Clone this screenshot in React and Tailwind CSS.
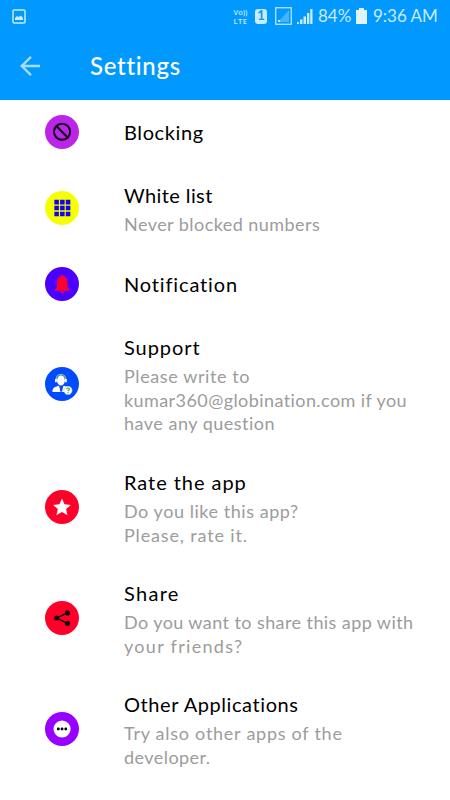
const icons = {
  block: (
    <g fill="none" stroke="#0b0010" strokeWidth="2">
      <circle cx="17.3" cy="17" r="8.2" />
      <path d="M11.5 11.2 23 22.8" />
    </g>
  ),
  grid: (
    <path
      fill="#1400f5"
      d="M9.5 9h4.6v4.6H9.5zM15.3 9h4.6v4.6h-4.6zM21.1 9h4.6v4.6h-4.6zM9.5 15h4.6v4.6H9.5zM15.3 15h4.6v4.6h-4.6zM21.1 15h4.6v4.6h-4.6zM9.5 21h4.6v4.6H9.5zM15.3 21h4.6v4.6h-4.6zM21.1 21h4.6v4.6h-4.6z"
    />
  ),
  bell: (
    <path
      fill="#ff0030"
      d="M16.2 9.3a1.3 1.3 0 0 1 2.6 0c2.7.7 4 3 4 5.7v5.4l2.1 2.4v1.2H10.1v-1.2l2.1-2.4V15c0-2.7 1.3-5 4-5.7zM15.6 24.7h3.8a1.9 1.9 0 0 1-3.8 0z"
    />
  ),
  support: (
    <g>
      <path fill="#fff" d="M7.5 25.4c0-4.1 1.8-5.4 6.4-6.5l2.6 3.2 2.5-3.2c3.2.7 5.3 1.8 5.5 4.6v1.9z" />
      <path fill="#004bff" d="m14.4 18.7 1.2 6.5h1.7l1.3-6.5-2.1 1.5z" />
      <ellipse cx="16.2" cy="13.6" rx="4" ry="5.2" fill="#fff" />
      <path fill="none" stroke="#86bf78" strokeWidth="1.4" d="M11.4 14v-1.7a4.8 4.8 0 0 1 9.6 0V15" />
      <path stroke="#fff" strokeWidth="1.7" d="M11.1 12.2v3.4M21.3 12.2v3.4" />
      <circle cx="23.3" cy="23.8" r="4.2" fill="#fff" stroke="#9bcfa0" strokeWidth=".6" />
      <path fill="none" stroke="#43a127" strokeWidth="1.2" d="M21.9 22.6c.1-1.8 2.9-1.7 2.9 0 0 1-1.4 1-1.4 2.1M23.4 25.6v1.1" />
    </g>
  ),
  star: (
    <path
      fill="#fff"
      d="m17.2 8.7 2.6 5.8 6.4.6-4.8 4.2 1.4 6.3-5.6-3.3-5.6 3.3 1.4-6.3-4.8-4.2 6.4-.6z"
    />
  ),
  share: (
    <g fill="#16000a">
      <path fill="none" stroke="#16000a" strokeWidth="1.3" d="M22.7 12 11.8 17.3l10.9 5.4" />
      <circle cx="22.8" cy="12.1" r="2.6" />
      <circle cx="11.8" cy="17.3" r="2.6" />
      <circle cx="22.8" cy="22.6" r="2.6" />
    </g>
  ),
  more: (
    <g>
      <circle cx="17.3" cy="17.3" r="8.7" fill="#fff" />
      <g fill="#000">
        <circle cx="13.5" cy="17.3" r="1.5" />
        <circle cx="17.3" cy="17.3" r="1.5" />
        <circle cx="21.1" cy="17.3" r="1.5" />
      </g>
    </g>
  ),
};

const rows = [
  { icon: "block", bg: "bg-[#bd24ea]", h: "h-16", title: ["Blocking", "tracking-[0.6px]"], lines: [] },
  {
    icon: "grid", bg: "bg-[#f5ff00]", h: "h-[88px]", title: ["White list", "tracking-[0.4px]"],
    lines: [["Never blocked numbers", "tracking-[0.45px]"]],
  },
  { icon: "bell", bg: "bg-[#4b00ff]", h: "h-16", title: ["Notification", "tracking-[0.85px]"], lines: [] },
  {
    icon: "support", bg: "bg-[#004bff]", h: "h-[135px]", title: ["Support", "tracking-[0.95px]"],
    lines: [
      ["Please write to", "tracking-[0.6px]"],
      ["kumar360@globination.com if you", "tracking-[0.42px]"],
      ["have any question", "tracking-[0.5px]"],
    ],
  },
  {
    icon: "star", bg: "bg-[#ff002b]", h: "h-[111px]", title: ["Rate the app", "tracking-[0.95px]"],
    lines: [["Do you like this app?", "tracking-[0.55px]"], ["Please, rate it.", "tracking-[0.85px]"]],
  },
  {
    icon: "share", bg: "bg-[#ff002b]", h: "h-[111px]", title: ["Share", "tracking-[1.3px]"],
    lines: [["Do you want to share this app with", "tracking-[0.42px]"], ["your friends?", "tracking-[1.3px]"]],
  },
  {
    icon: "more", bg: "bg-[#9800ff]", h: "h-28", title: ["Other Applications", "tracking-[0.58px]"],
    lines: [["Try also other apps of the", "tracking-[0.74px]"], ["developer.", "tracking-[0.45px]"]],
  },
];

function StatusBar() {
  return (
    <div className="flex h-8 items-center pl-3 pr-[13px] text-[#c9eaff]">
      <svg width="14" height="15" viewBox="0 0 14 15" fill="none">
        <rect x="1" y="1" width="12" height="13" rx="1" stroke="currentColor" strokeWidth="1.5" />
        <path d="M3 11V9l2-2 1.5 1L9 6.5 11 9v2z" fill="currentColor" />
      </svg>
      <div className="ml-auto flex items-center">
        <div className="w-[17px] text-center font-['Open_Sans',sans-serif] text-[7.5px] font-semibold">
          <div className="h-2 leading-2 whitespace-nowrap">Vo))</div>
          <div className="h-2 leading-[10px] tracking-[0.5px]">LTE</div>
        </div>
        <div className="ml-1.5 flex h-[15px] w-3 items-center justify-center rounded-[3px] bg-[#c9eaff] text-[13px] font-bold text-[#0299ff]">1</div>
        <svg className="ml-2" width="17" height="18" viewBox="0 0 17 18">
          <rect x=".75" y=".75" width="15.5" height="16.5" fill="none" stroke="currentColor" strokeWidth="1.2" />
          <path d="M3 15 14 3v12z" fill="#45b4ff" />
          <path d="M3 13h2v2H3z" fill="currentColor" />
        </svg>
        <svg className="ml-[5px]" width="16" height="16" viewBox="0 0 16 16" fill="currentColor">
          <path d="M0 14h2v2H0zM3 11.5h2.5V16H3zM6.5 8.5H9V16H6.5zM10 5h2.3v11H10zM13.2 1h2.3v15h-2.3z" />
        </svg>
        <span className="ml-[5px] w-[34px] text-[17px] whitespace-nowrap">84%</span>
        <svg className="ml-1" width="11" height="16" viewBox="0 0 11 16" fill="#e0f4ff">
          <path d="M3 0h5v2h3v14H0V2h3z" />
        </svg>
        <span className="ml-1.5 w-[64px] text-[17px] whitespace-nowrap">9:36 AM</span>
      </div>
    </div>
  );
}

export default function App() {
  return (
    <div className="h-[800px] w-[450px] overflow-hidden bg-white font-['Lato',sans-serif]">
      <header className="h-[100px] bg-[#0299ff]">
        <StatusBar />
        <div className="flex h-[68px] items-center pl-5">
          <svg width="21" height="20" viewBox="0 0 21 20" fill="none" stroke="#a9ddff" strokeWidth="2.3">
            <path d="M20 10H1.8M11 .9 1.7 10l9.3 9.1" />
          </svg>
          <h1 className="ml-[49px] text-[24px] font-medium tracking-[0.7px] text-white">Settings</h1>
        </div>
      </header>
      <main>
        {rows.map((row) => (
          <section key={row.icon} className={`flex items-center pl-[45px] ${row.h}`}>
            <div className={`h-[34px] w-[34px] shrink-0 rounded-full ${row.bg}`}>
              <svg width="34" height="34" viewBox="0 0 34.5 34.5">{icons[row.icon]}</svg>
            </div>
            <div className={`ml-[45px] whitespace-nowrap ${row.lines.length > 0 ? "pt-0.5" : ""}`}>
              <h2 className={`text-[20px] leading-7 font-normal text-black ${row.title[1]}`}>{row.title[0]}</h2>
              {row.lines.length > 0 && (
                <div className="pt-1">
                  {row.lines.map(([text, tracking]) => (
                    <p key={text} className={`text-[18px] leading-[23.7px] text-[#9c9c9c] ${tracking}`}>{text}</p>
                  ))}
                </div>
              )}
            </div>
          </section>
        ))}
      </main>
    </div>
  );
}
